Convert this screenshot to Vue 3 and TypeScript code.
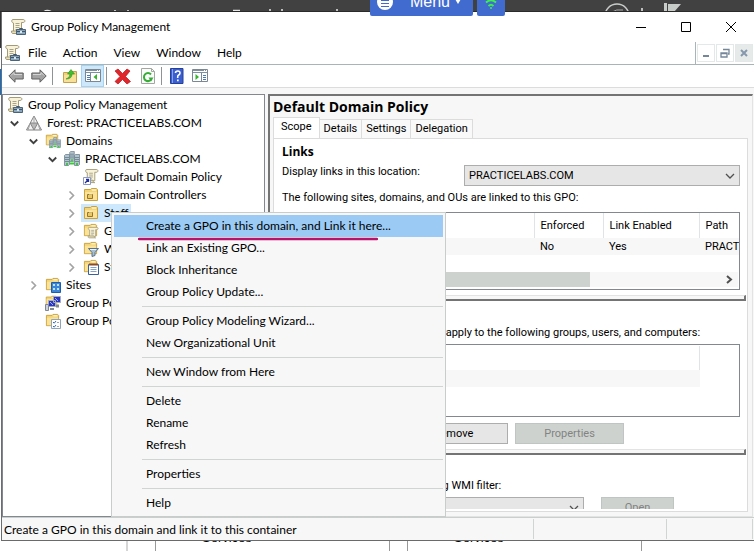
<script setup lang="ts">
import { ref } from 'vue'

interface TreeNode {
  label: string
  level: number
  icon: string
  state?: 'open' | 'closed'
}

const menus: string[] = ['File', 'Action', 'View', 'Window', 'Help']

const tree: TreeNode[] = [
  { label: 'Group Policy Management', level: 0, icon: 'i-gpm' },
  { label: 'Forest: PRACTICELABS.COM', level: 1, icon: 'i-forest', state: 'open' },
  { label: 'Domains', level: 2, icon: 'i-domains', state: 'open' },
  { label: 'PRACTICELABS.COM', level: 3, icon: 'i-domain', state: 'open' },
  { label: 'Default Domain Policy', level: 4, icon: 'i-link' },
  { label: 'Domain Controllers', level: 4, icon: 'i-ou', state: 'closed' },
  { label: 'Staff', level: 4, icon: 'i-ou', state: 'closed' },
  { label: 'Group Policy Objects', level: 4, icon: 'i-objects', state: 'closed' },
  { label: 'WMI Filters', level: 4, icon: 'i-filter', state: 'closed' },
  { label: 'Starter GPOs', level: 4, icon: 'i-starter', state: 'closed' },
  { label: 'Sites', level: 2, icon: 'i-sites', state: 'closed' },
  { label: 'Group Policy Modeling', level: 2, icon: 'i-modeling' },
  { label: 'Group Policy Results', level: 2, icon: 'i-results' },
]
const selected = ref('Staff')

const tabs: string[] = ['Scope', 'Details', 'Settings', 'Delegation']
const activeTab = ref('Scope')

const contextGroups: string[][] = [
  ['Create a GPO in this domain, and Link it here...', 'Link an Existing GPO...', 'Block Inheritance', 'Group Policy Update...'],
  ['Group Policy Modeling Wizard...', 'New Organizational Unit'],
  ['New Window from Here'],
  ['Delete', 'Rename', 'Refresh'],
  ['Properties'],
  ['Help'],
]
const hovered = ref(contextGroups[0][0])
</script>

<template>
  <div class="desktop">
    <svg class="defs" aria-hidden="true">
      <defs>
        <symbol id="scroll" viewBox="0 0 16 16">
          <path d="M3 .5h10c2.500 0 2.500 3 0 3h-1.500v9H3.500V4C1.500 4 1 .5 3 .5z" fill="#f7f2d8" stroke="#a39b78" />
          <path d="M1.500 12H9.500c.3 2 1 2.500 2 2.500H3c-1.400 0-1.600-1-1.500-2.500z" fill="#e8e0b8" stroke="#a39b78" />
          <path d="M5.500 4.500h4M5.500 6.500h4M5.500 8.500h4M5.500 10.500h3" stroke="#a9a48c" />
        </symbol>
        <symbol id="folder" viewBox="0 0 16 16">
          <path d="M1.500 2.500h6l1-1h5l1 1v11h-13z" fill="#f3d477" stroke="#c9a13f" />
          <path d="M2 5h12v8H2z" fill="#fae398" />
          <path d="M9 3h4" stroke="#fff" />
        </symbol>
        <symbol id="tower" viewBox="0 0 6 12">
          <path d="M.5 1.500l1-1h4v10l-1 1h-4z" fill="#b4c4ce" stroke="#6d818e" stroke-width=".8" />
          <path d="M1 3.500h4M1 5.500h4M1 7.500h4" stroke="#627b8a" stroke-width=".8" />
          <path d="M2 9h2v2H2z" fill="#35cf35" />
        </symbol>
        <symbol id="i-gpm" viewBox="0 0 16 16">
          <use href="#scroll" width="16" height="16" />
          <path d="M9.500 10.500v-1h3v1" fill="none" stroke="#40586c" />
          <path d="M6.500 10.500h9v5h-9z" fill="#8ba7bc" stroke="#4a6378" />
          <path d="M7 12.500h8" stroke="#405668" />
          <path d="M10 12h2v2h-2z" fill="#dce7ee" />
        </symbol>
        <symbol id="i-forest" viewBox="0 0 16 16">
          <path d="M8 1l7.500 14H.5z" fill="#f2f2f2" stroke="#828282" />
          <path d="M4.200 8h7.600L8 15z" fill="#b9b9b9" stroke="#858585" />
          <path d="M8 1v7M4 9L2 15M12 9l2 6" stroke="#a5a5a5" />
        </symbol>
        <symbol id="i-domain" viewBox="0 0 16 16">
          <use href="#tower" x="5" y="0" width="6" height="11" />
          <use href="#tower" x="0" y="3" width="6" height="12" />
          <use href="#tower" x="10" y="3" width="6" height="12" />
          <path d="M6 12.500h4" stroke="#35cf35" stroke-width="2" />
        </symbol>
        <symbol id="i-domains" viewBox="0 0 16 16">
          <use href="#folder" width="14" height="14" />
          <use href="#i-domain" x="4" y="4" width="12" height="12" />
        </symbol>
        <symbol id="i-link" viewBox="0 0 16 16">
          <use href="#scroll" x="1" width="15" height="15" />
          <path d="M.5 8.500h7v7h-7z" fill="#fff" stroke="#8c9cc0" />
          <path d="M2 14l3-3M3 10.500h2.500V13" fill="none" stroke="#1f2f9a" stroke-width="1.300" />
        </symbol>
        <symbol id="i-ou" viewBox="0 0 16 16">
          <use href="#folder" width="16" height="16" />
          <path d="M4.500 7.500h5v4h-5z" fill="#e9c964" stroke="#99752a" />
          <path d="M6 7h3" stroke="#fff3c0" />
        </symbol>
        <symbol id="i-objects" viewBox="0 0 16 16">
          <use href="#folder" width="15" height="15" />
          <use href="#scroll" x="4" y="4" width="12" height="12" />
        </symbol>
        <symbol id="i-filter" viewBox="0 0 16 16">
          <use href="#folder" width="15" height="15" />
          <path d="M5.500 7.500h10l-3.500 4v3l-3 1v-4z" fill="#a9c0d2" stroke="#5a7388" />
          <path d="M7 8.500h6" stroke="#eef5fa" />
        </symbol>
        <symbol id="i-starter" viewBox="0 0 16 16">
          <use href="#folder" width="15" height="15" />
          <path d="M5.500 5.500h10v10h-10z" fill="#fff" stroke="#38619c" />
          <path d="M6 5.500h9" stroke="#8a4b2a" stroke-width="2" />
          <path d="M7.500 8.500h6M7.500 10.500h6M7.500 12.500h6" stroke="#85a2c8" />
        </symbol>
        <symbol id="i-sites" viewBox="0 0 16 16">
          <use href="#folder" width="15" height="15" />
          <path d="M6.500 5.500h9v10h-9z" fill="#3c86d8" stroke="#1c5eaa" />
          <path d="M8 7h2v2H8zM12 7h2v2h-2zM8 11h2v2H8zM12 11h2v2h-2z" fill="#bfe0ff" />
        </symbol>
        <symbol id="i-modeling" viewBox="0 0 16 16">
          <use href="#folder" width="13" height="13" />
          <path d="M8.500 1.500h7v6h-7zM3.500 5.500h7v6h-7z" fill="#2a35c4" stroke="#a5adb8" />
          <path d="M11 9.500h3v3h-3zM5 13h4v2H5z" fill="#7e8793" />
          <path d="M.5 9.500h3v6h-3z" fill="#cfd4da" stroke="#7e8793" />
          <path d="M5 7l3 3M10 3l3 3" stroke="#9eb0ff" />
        </symbol>
        <symbol id="i-results" viewBox="0 0 16 16">
          <use href="#folder" width="15" height="15" />
          <path d="M6.500 6.500h9v9h-9z" fill="#fff" stroke="#90a5b8" />
          <path d="M8 9l1.200 1.200L11 8M8 13l1.200 1.200L11 12" fill="none" stroke="#2f6fb5" />
          <path d="M12 9.500h2M12 13.500h2" stroke="#9aa" />
        </symbol>
        <symbol id="arrow" viewBox="0 0 16 14">
          <path d="M.8 7L7 .8V4h8.200v6H7v3.200z" fill="#a3a3a3" stroke="#5e5e5e" />
          <path d="M3 6.500L6 3.500V5.500h8" fill="none" stroke="#d4d4d4" />
        </symbol>
        <symbol id="panel" viewBox="0 0 16 14">
          <path d="M.5.5h15v12H.5z" fill="#fff" stroke="#7b8894" />
          <path d="M1 1.500h14M1 3.500h14" stroke="#7f909e" />
          <path d="M12 1.500h1M14 1.500h1" stroke="#fff" />
        </symbol>
      </defs>
    </svg>

    <header class="topbar">
      <svg class="marks" width="754" height="12" viewBox="0 0 754 12" aria-hidden="true">
        <path d="M44 11.500q3-2 7 0M115 10v2M128 10v2M233 10.500h7M270 9v3M282 9v3M337 9v3M642 8v4" fill="none" stroke="#e8e8e8" stroke-width="1.500" />
        <circle cx="617" cy="16" r="12" fill="none" stroke="#c8ccc8" stroke-width="1.500" />
        <path d="M612 12q4-3 11-2" fill="none" stroke="#aaa" />
        <path d="M664 3h3v9h-3zM668 4h13l-7 8h-6z" fill="#c8ccc8" />
      </svg>
    </header>

    <div class="dock">
      <button class="dock-menu" type="button">
        <svg width="16" height="16" viewBox="0 0 16 16" aria-hidden="true">
          <circle cx="8" cy="8" r="8" fill="#fff" />
          <path d="M4 6.500h8M4 9.500h8M4 12.500h8" stroke="#426bd0" />
        </svg>
        <span>Menu</span>
        <svg width="6" height="5" viewBox="0 0 6 5" aria-hidden="true"><path d="M0 0h6L3 5z" fill="#fff" /></svg>
      </button>
      <button class="dock-wifi" type="button" aria-label="Connection">
        <svg width="18" height="16" viewBox="0 0 18 16" aria-hidden="true">
          <path d="M1 6q8-7 16 0M4 9.500q5-4.500 10 0M6.500 13q2.500-2.500 5 0" fill="none" stroke="#3df04e" stroke-width="1.800" />
          <circle cx="9" cy="15" r="1" fill="#3df04e" />
        </svg>
      </button>
    </div>

    <div class="body">
      <div class="edge"><i class="e-dark"></i><i class="e-white"></i><i class="e-blue"></i></div>
      <main class="window">
        <div class="titlebar">
          <svg width="16" height="16"><use href="#i-gpm" /></svg>
          <span class="title">Group Policy Management</span>
          <div class="controls">
            <button type="button" aria-label="Minimize"><svg width="12" height="12"><path d="M1 6.500h10" stroke="#000" /></svg></button>
            <button type="button" aria-label="Maximize"><svg width="12" height="12"><path d="M1.500 1.500h9v9h-9z" fill="none" stroke="#000" /></svg></button>
            <button type="button" aria-label="Close"><svg width="12" height="12"><path d="M1 1l10 10M11 1L1 11" stroke="#000" /></svg></button>
          </div>
        </div>

        <nav class="menubar">
          <svg width="16" height="16"><use href="#i-gpm" /></svg>
          <button v-for="m in menus" :key="m" type="button">{{ m }}</button>
          <div class="mdi">
            <button type="button" aria-label="Minimize child"><svg width="10" height="10"><path d="M2 8h6" stroke="#75869a" stroke-width="2" /></svg></button>
            <button type="button" aria-label="Restore child"><svg width="10" height="10"><path d="M3 1.500h6V6H8M1 5h6v4H1zM1 5.500h6" fill="none" stroke="#75869a" stroke-width="1.300" /></svg></button>
            <button type="button" class="mdi-close" aria-label="Close child"><svg width="10" height="10"><path d="M2 2l6 6M8 2L2 8" stroke="#8598ad" stroke-width="2" /></svg></button>
          </div>
        </nav>

        <div class="toolbar">
          <button type="button" class="w23" aria-label="Back"><svg width="16" height="14"><use href="#arrow" /></svg></button>
          <button type="button" class="w23" aria-label="Forward"><svg class="flip" width="16" height="14"><use href="#arrow" /></svg></button>
          <i class="sep"></i>
          <button type="button" class="w23 lead" aria-label="Up one level">
            <svg width="16" height="16">
              <path d="M1.500 4.500h5l1-1h7v11h-13z" fill="#f1d279" stroke="#c2a04c" />
              <path d="M2 7h12v7H2z" fill="#f8e098" />
              <path d="M4 11q4-1 4-5H5.500L9 1.500 12.500 6H10q0 5-6 5z" fill="#3fbf2f" stroke="#2b9420" stroke-width=".6" />
            </svg>
          </button>
          <button type="button" class="w23 on" aria-label="Show console tree">
            <svg width="16" height="14"><use href="#panel" /><path d="M5.500 4v8" stroke="#7b8894" /><path d="M2 6.500h3M2 8.500h3M2 10.500h3" stroke="#4a7ab5" /><path d="M12 5v6L8.500 8z" fill="#35b52b" /></svg>
          </button>
          <i class="sep"></i>
          <button type="button" class="w27" aria-label="Delete">
            <svg width="17" height="17"><path d="M1 3l3-2 4.500 4.500L13 1l3 2-4.500 5.500 5 5-3.500 2.500-4.500-4.500L4 16l-3-2.500 5-5z" fill="#e0262b" stroke="#b3151a" stroke-width=".7" /></svg>
          </button>
          <button type="button" class="w23" aria-label="Refresh">
            <svg width="14" height="16"><path d="M.5.5h10l3 3v12H.5z" fill="#fbfbfb" stroke="#a0a8a0" /><path d="M10.500.5v3h3" fill="none" stroke="#a0a8a0" /><path d="M10 6.500A4 4 0 1 0 10.500 11" fill="none" stroke="#35ad35" stroke-width="2" /><path d="M7.500 9.500h5L10 13.500z" fill="#35ad35" /></svg>
          </button>
          <i class="sep"></i>
          <button type="button" class="w23 help" aria-label="Help">
            <svg width="14" height="16"><path d="M.5.5h12.500v15H.5z" fill="#3c5fd0" stroke="#24409a" /><path d="M2.500 1v14" stroke="#8aa2ee" /><path d="M5.500 5q0-2 2.300-2T10 5q0 1.200-1.300 2T7.700 9v1" fill="none" stroke="#fff" stroke-width="1.600" /><path d="M7 11.500h1.700v1.700H7z" fill="#fff" /></svg>
          </button>
          <button type="button" class="w23" aria-label="Show action pane">
            <svg width="16" height="14"><use href="#panel" /><path d="M9.500 4v8" stroke="#7b8894" /><path d="M11 6.500h3M11 8.500h3M11 10.500h3" stroke="#4a7ab5" /><path d="M3.500 5v6L7 8z" fill="#35b52b" /></svg>
          </button>
        </div>

        <div class="panes">
          <ul class="tree" role="tree">
            <li v-for="n in tree" :key="n.label" role="treeitem" :class="['l' + n.level, { sel: n.label === selected }]" @click="selected = n.label">
              <svg class="tw" width="9" height="9" aria-hidden="true">
                <path v-if="n.state === 'open'" d="M.8 2.500L4.500 6.200 8.200 2.500" fill="none" stroke="#404040" stroke-width="1.800" />
                <path v-if="n.state === 'closed'" d="M2.500.5L6.500 4.500 2.500 8.500" fill="none" stroke="#a3a3a3" stroke-width="1.600" />
              </svg>
              <span class="node"><svg width="16" height="16"><use :href="'#' + n.icon" /></svg><span>{{ n.label }}</span></span>
            </li>
          </ul>

          <section class="detail">
            <h1>Default Domain Policy</h1>
            <div class="tabs" role="tablist">
              <button v-for="t in tabs" :key="t" type="button" role="tab" :class="{ active: t === activeTab }" @click="activeTab = t">{{ t }}</button>
            </div>
            <div class="sheet">
              <div class="clip">
                <div class="group">
                  <h2>Links</h2>
                  <div class="location">
                    <label for="loc">Display links in this location:</label>
                    <div class="combo">
                      <select id="loc"><option>PRACTICELABS.COM</option></select>
                      <svg width="10" height="10" aria-hidden="true"><path d="M1 3l4 4 4-4" fill="none" stroke="#505050" stroke-width="1.300" /></svg>
                    </div>
                  </div>
                  <p class="linked">The following sites, domains, and OUs are linked to this GPO:</p>
                  <div class="list links">
                    <table>
                      <colgroup><col class="c1" /><col class="c2" /><col class="c3" /><col class="c4" /></colgroup>
                      <thead><tr><th>Location</th><th>Enforced</th><th>Link Enabled</th><th>Path</th></tr></thead>
                      <tbody><tr><td>PRACTICELABS.COM</td><td>No</td><td>Yes</td><td>PRACTICELABS.COM</td></tr></tbody>
                    </table>
                    <div class="hscroll">
                      <i class="thumb"></i>
                      <svg width="8" height="9" aria-hidden="true"><path d="M2 1l4 3.500L2 8" fill="none" stroke="#505050" stroke-width="2" /></svg>
                    </div>
                  </div>
                </div>
                <div class="splitter"></div>
                <div class="group second">
                  <h2>Security Filtering</h2>
                  <p>The settings in this GPO can only apply to the following groups, users, and computers:</p>
                  <div class="list names"><div class="nhead"></div><div class="nrow"></div></div>
                  <div class="buttons">
                    <button type="button">Add...</button>
                    <button type="button">Remove</button>
                    <button type="button" disabled>Properties</button>
                  </div>
                </div>
                <div class="splitter"></div>
                <div class="group">
                  <h2>WMI Filtering</h2>
                  <label class="wmi" for="wmi">This GPO is linked to the following WMI filter:</label>
                  <div class="wmi-row">
                    <div class="combo">
                      <select id="wmi"><option>&lt;none&gt;</option></select>
                      <svg width="10" height="10" aria-hidden="true"><path d="M1 3l4 4 4-4" fill="none" stroke="#505050" stroke-width="1.300" /></svg>
                    </div>
                    <button type="button" disabled>Open</button>
                  </div>
                </div>
              </div>
            </div>
          </section>
        </div>

        <footer class="status">
          <span class="s-main">Create a GPO in this domain and link it to this container</span>
          <span class="s-a"></span>
          <span class="s-b"></span>
        </footer>
      </main>
    </div>

    <div class="under">
      <i class="u-line"></i>
      <div class="u-card">Services</div>
      <div class="u-card">Services</div>
    </div>

    <div class="context" role="menu">
      <div v-for="(g, i) in contextGroups" :key="i" class="cgroup">
        <button v-for="c in g" :key="c" type="button" role="menuitem" :class="{ hot: c === hovered }" @mouseenter="hovered = c">{{ c }}</button>
      </div>
      <svg class="marker" width="240" height="4" viewBox="0 0 240 4" aria-hidden="true"><path d="M1 2h238" stroke="#b5146a" stroke-width="2.500" stroke-linecap="round" /></svg>
    </div>
  </div>
</template>

<style>
body {
  margin: 0;
  background: #fff;
}
</style>

<style scoped>
* {
  box-sizing: border-box;
}
.desktop {
  position: relative;
  display: flex;
  flex-direction: column;
  height: 100vh;
  min-height: 551px;
  overflow: hidden;
  font: 12px/18px Lato, "Open Sans", sans-serif;
  color: #000;
}
.defs {
  position: absolute;
  width: 0;
  height: 0;
}
button,
select {
  font: inherit;
  color: inherit;
  margin: 0;
  padding: 0;
  border: 0;
  background: none;
  border-radius: 0;
}
svg {
  display: block;
  flex: none;
}
h1,
h2,
p,
ul {
  margin: 0;
  padding: 0;
}
.topbar {
  flex: none;
  height: 12px;
  background: #414141;
  border-bottom: 1px solid #2a2a2a;
  overflow: hidden;
}
.dock {
  position: absolute;
  top: 0;
  left: 370px;
  display: flex;
  gap: 4px;
  height: 16px;
  overflow: hidden;
}
.dock button {
  display: flex;
  align-items: flex-end;
  background: #426bd0;
  border-radius: 0 0 2px 2px;
  color: #fff;
}
.dock .dock-menu {
  width: 103px;
  padding: 0 12px 6px 7px;
  justify-content: space-between;
  font: 16px/16px "Liberation Sans", sans-serif;
}
.dock-menu span {
  padding-left: 12px;
  height: 16px;
}
.dock .dock-menu svg:last-child {
  margin-bottom: 6px;
}
.dock .dock-wifi {
  width: 28px;
  padding: 0 5px 7px;
}
.body {
  flex: 1;
  min-height: 0;
  display: flex;
}
.edge {
  width: 1px;
  display: flex;
  flex-direction: column;
}
.e-dark {
  height: 36px;
  background: #333;
}
.e-white {
  height: 21px;
}
.e-blue {
  height: 26px;
  background: #1070d0;
}
.window {
  flex: 1;
  min-width: 0;
  display: flex;
  flex-direction: column;
  background: #fff;
  border-left: 1px solid #6a6e70;
  border-bottom: 1px solid #6a6a6a;
}
.titlebar {
  height: 30px;
  flex: none;
  display: flex;
  align-items: center;
  padding-left: 8px;
  gap: 5px;
}
.controls {
  margin-left: auto;
  padding-right: 1px;
  display: flex;
}
.controls button {
  width: 45px;
  height: 28px;
  display: grid;
  place-items: center;
}
.menubar {
  height: 23px;
  flex: none;
  display: flex;
  align-items: center;
  padding-left: 2px;
  border-bottom: 1px solid #a9b4b6;
}
.menubar > button {
  padding: 0 8px;
}
.mdi {
  margin-left: auto;
  align-self: stretch;
  display: flex;
  align-items: center;
  gap: 1px;
  padding: 0 1px;
  border-left: 1px solid #a9b4b6;
}
.mdi button {
  width: 18px;
  height: 18px;
  display: grid;
  place-items: center;
  border: 1px solid #e3e8e8;
}
.mdi .mdi-close {
  background: #e6eae8;
}
.toolbar {
  height: 23px;
  flex: none;
  display: flex;
  align-items: center;
  padding-left: 2px;
  border-bottom: 1px solid #dcdcdc;
}
.toolbar button {
  height: 22px;
  display: grid;
  place-items: center;
}
.toolbar .w23 {
  width: 23px;
}
.toolbar .w27 {
  width: 27px;
}
.toolbar .lead {
  margin-left: 3px;
}
.toolbar .help {
  margin-left: 1px;
}
.toolbar .on {
  background: #cde8fa;
  border: 1px solid #a3d2f2;
}
.flip {
  transform: scaleX(-1);
}
.sep {
  width: 1px;
  height: 18px;
  margin: 0 2px;
  background: #8c9496;
}
.panes {
  flex: 1;
  min-height: 0;
  display: flex;
  gap: 3px;
  padding: 6px 1px 0 0;
  background: #f7f7f7;
}
.tree {
  flex: none;
  width: 263px;
  list-style: none;
  padding-top: 1px;
  border: 1px solid #828790;
  background: #fff;
  overflow: hidden;
}
.tree li {
  display: flex;
  align-items: center;
  height: 18px;
  white-space: nowrap;
}
.tw {
  margin-right: 5px;
}
.l0 .tw {
  display: none;
}
.l0 {
  padding-left: 2px;
}
.l1 {
  padding-left: 7px;
}
.l2 {
  padding-left: 26px;
}
.l3 {
  padding-left: 45px;
}
.l4 {
  padding-left: 64px;
}
.node {
  display: flex;
  align-items: center;
  gap: 5px;
  padding: 0 3px 0 2px;
}
.sel .node {
  background: #cde8fc;
}
.detail {
  flex: 1;
  min-width: 0;
  display: flex;
  flex-direction: column;
  padding: 1px 4px 4px 3px;
  background: #f7f7f7;
  border-top: 2px solid #747474;
  border-left: 2px solid #747474;
  border-right: 1px solid #e3e3e3;
  border-bottom: 1px solid #e3e3e3;
  font: 11px/18px Roboto, "Liberation Sans", sans-serif;
}
h1 {
  font: bold 14px/20px "Open Sans", sans-serif;
}
.tabs {
  display: flex;
  align-items: flex-end;
  height: 21px;
  flex: none;
}
.tabs button {
  height: 19px;
  padding: 0 4px;
  border: 1px solid #dcdcdc;
  border-left-width: 0;
  border-bottom: 0;
  background: #f9f9f9;
}
.tabs .active {
  height: 21px;
  padding: 0 7px 2px;
  border-left-width: 1px;
  background: #fff;
}
.sheet {
  flex: 1;
  min-height: 0;
  display: flex;
  padding-bottom: 2px;
  border: 1px solid #dcdcdc;
  background: #fff;
}
.clip {
  flex: 1;
  min-width: 0;
  overflow: hidden;
}
.group {
  padding: 4px 7px 0 8px;
}
.second {
  padding-top: 3px;
}
h2 {
  font: bold 12px/18px "Open Sans", sans-serif;
}
.location {
  display: grid;
  grid-template-columns: 182px 1fr;
  margin-top: 4px;
}
.location label {
  line-height: 14px;
}
.combo {
  display: grid;
  grid-template-columns: 1fr 18px;
  align-items: center;
}
.combo select {
  grid-area: 1 / 1 / 2 / 3;
  appearance: none;
  height: 21px;
  padding-left: 4px;
  border: 1px solid #adadad;
  background: #e6e6e6;
}
.combo svg {
  grid-area: 1 / 2;
  justify-self: center;
  margin-right: 2px;
  pointer-events: none;
}
.linked {
  margin: 3px 0 5px;
}
.list {
  border: 1px solid #828790;
  overflow: hidden;
  background: #fff;
}
.links {
  height: 78px;
  display: flex;
  flex-direction: column;
  padding: 0 1px 2px;
}
table {
  table-layout: fixed;
  width: 520px;
  border-collapse: collapse;
}
.c1 {
  width: 250px;
}
.c2 {
  width: 69px;
}
.c3 {
  width: 96px;
}
th,
td {
  height: 17px;
  padding: 0 0 0 6px;
  text-align: left;
  font-weight: normal;
  line-height: 17px;
  white-space: nowrap;
}
th {
  height: 25px;
  border-right: 1px solid #e0e4e4;
}
td {
  background: #f7f7f7;
}
.hscroll {
  display: flex;
  align-items: center;
  justify-content: space-between;
  height: 15px;
  margin-top: auto;
  padding: 0 5px 0 15px;
  background: #f7f7f7;
}
.thumb {
  width: 67%;
  height: 15px;
  background: #cdd2ce;
}
.splitter {
  height: 6px;
  margin: 5px 1px 0 0;
  border-top: 1px solid #e3e3e3;
  border-right: 2px solid #747474;
  border-bottom: 2px solid #747474;
  background: #f7f7f7;
}
.second p {
  margin-top: 2px;
}
.names {
  height: 73px;
  margin-top: 2px;
  padding: 1px 39px 0 1px;
}
.nhead {
  height: 24px;
  border-right: 1px solid #e0e4e4;
}
.nrow {
  height: 17px;
  background: #f7f7f7;
}
.buttons {
  display: flex;
  gap: 7px;
  padding-left: 1px;
  margin-top: 6px;
}
.buttons button,
.wmi-row button {
  width: 109px;
  height: 21px;
  border: 1px solid #adadad;
  background: #e6e6e6;
}
.buttons button:disabled,
.wmi-row button:disabled {
  background: #cdd2ce;
  border-color: #bfc5c2;
  color: #838383;
}
.wmi {
  display: block;
}
.wmi-row {
  display: flex;
  gap: 17px;
  margin-top: 2px;
}
.wmi-row .combo {
  width: 302px;
}
.wmi-row button {
  width: 73px;
}
.status {
  flex: none;
  height: 23px;
  display: flex;
  align-items: center;
  padding: 1px 1px 1px 2px;
  border-top: 1px solid #c8cfcd;
  background: #f7f7f7;
}
.status span {
  height: 20px;
  line-height: 22px;
  border-right: 1px solid #d0d4d3;
}
.s-main {
  flex: 1;
}
.s-a {
  width: 133px;
}
.s-b {
  width: 86px;
}
.under {
  flex: none;
  height: 10px;
  display: flex;
  gap: 17px;
  overflow: hidden;
}
.u-line {
  width: 128px;
  margin-right: 10px;
  border-right: 2px solid #d6d6d6;
}
.u-card {
  width: 235px;
  display: flex;
  align-items: flex-end;
  padding: 0 0 4px 46px;
  border: 1px solid #999;
  border-width: 0 1px;
  font: 13px/18px "Liberation Sans", sans-serif;
}
.context {
  position: absolute;
  left: 111px;
  top: 212px;
  width: 335px;
  padding: 2px;
  background: #f7f7f7;
  border: 1px solid #c8cccb;
}
.cgroup + .cgroup {
  padding-top: 3px;
}
.cgroup + .cgroup::before {
  content: "";
  display: block;
  margin: 0 0 3px 28px;
  border-top: 1px solid #d0d4d3;
}
.context button {
  display: block;
  width: 100%;
  height: 22px;
  padding-left: 32px;
  text-align: left;
}
.context .hot {
  background: #9bcbf5;
}
.marker {
  position: absolute;
  left: 26px;
  top: 24px;
}
</style>
